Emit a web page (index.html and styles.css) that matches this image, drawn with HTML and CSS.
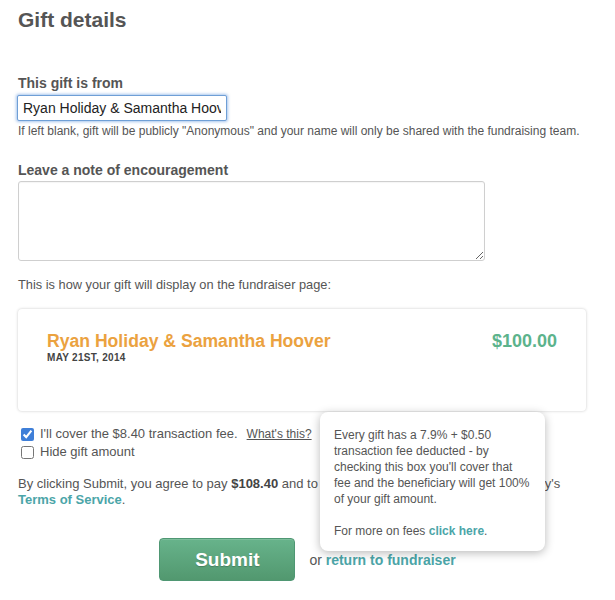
FILE: index.html
```html
<!DOCTYPE html>
<html>
<head>
<meta charset="utf-8">
<link rel="stylesheet" href="styles.css">
</head>
<body>
<main class="page">
  <h1 class="title">Gift details</h1>

  <label class="label label-from" for="from">This gift is from</label>
  <input class="text-input" id="from" type="text" value="Ryan Holiday &amp; Samantha Hoover">
  <p class="help">If left blank, gift will be publicly "Anonymous" and your name will only be shared with the fundraising team.</p>

  <label class="label label-note" for="note">Leave a note of encouragement</label>
  <textarea class="note" id="note"></textarea>

  <p class="preview-intro">This is how your gift will display on the fundraiser page:</p>

  <section class="gift-card">
    <div class="gift-info">
      <div class="gift-name">Ryan Holiday &amp; Samantha Hoover</div>
      <div class="gift-date">May 21st, 2014</div>
    </div>
    <div class="gift-amount">$100.00</div>
  </section>

  <div class="options">
    <label class="option">
      <input class="check" type="checkbox" checked>
      <span>I'll cover the $8.40 transaction fee.</span>
      <a class="whats" href="#">What's this?</a>
    </label>
    <label class="option">
      <input class="check" type="checkbox">
      <span>Hide gift amount</span>
    </label>

    <div class="tooltip">
      <p>Every gift has a 7.9% + $0.50 transaction fee deducted - by checking this box you'll cover that fee and the beneficiary will get 100% of your gift amount.</p>
      <p>For more on fees <a class="teal" href="#">click here</a>.</p>
    </div>
  </div>

  <p class="agree">By clicking Submit, you agree to pay <strong>$108.40</strong> and to accept the rules of fundraising company's <a class="teal" href="#">Terms of Service</a>.</p>

  <div class="actions">
    <button class="submit" type="button">Submit</button>
    <span class="alt">or <a class="teal" href="#">return to fundraiser</a></span>
  </div>
</main>
</body>
</html>
```

FILE: styles.css
```css
* { box-sizing: border-box; }

html, body {
  margin: 0;
  padding: 0;
  background: #fff;
}

body {
  font-family: "Liberation Sans", Arial, Helvetica, sans-serif;
  color: #555;
  font-size: 13px;
  line-height: 16px;
}

.page {
  position: relative;
  width: 615px;
  padding: 0 18px;
}

.title {
  margin: 8px 0 0;
  font-size: 21px;
  line-height: 24px;
  font-weight: bold;
  color: #555;
}

.label {
  display: block;
  font-weight: bold;
  font-size: 14px;
  line-height: 16px;
  color: #555;
}

.label-from { margin-top: 43px; }

.text-input {
  display: block;
  margin: 4px 0 0 -1px;
  width: 210px;
  height: 26px;
  padding: 0 5px;
  font-family: "Liberation Sans", Arial, sans-serif;
  font-size: 14px;
  color: #222;
  border: 1px solid #6f9fd6;
  border-radius: 2px;
  box-shadow: 0 0 3px 1px rgba(95, 150, 220, 0.55);
  outline: none;
}

.help {
  margin: 3px 0 0;
  font-size: 12px;
  line-height: 14px;
  color: #555;
  white-space: nowrap;
}

.label-note { margin-top: 24px; }

.note {
  display: block;
  margin: 3px 0 0;
  width: 467px;
  height: 80px;
  border: 1px solid #cfcfcf;
  border-radius: 3px;
  box-shadow: inset 0 1px 1px rgba(0,0,0,0.04);
  font-family: "Liberation Sans", Arial, sans-serif;
}

.preview-intro {
  margin: 16px 0 0;
  font-size: 12.8px;
  line-height: 16px;
}

.gift-card {
  margin-top: 16px;
  width: 568px;
  height: 102px;
  padding: 22px 29px 0;
  display: flex;
  justify-content: space-between;
  align-items: flex-start;
  background: #fff;
  border-radius: 4px;
  box-shadow: 0 0 3px rgba(0,0,0,0.22);
}

.gift-name {
  font-size: 17.6px;
  line-height: 20px;
  font-weight: bold;
  color: #eba23f;
}

.gift-date {
  margin-top: 1px;
  font-size: 10px;
  line-height: 11px;
  font-weight: bold;
  letter-spacing: 0.3px;
  text-transform: uppercase;
  color: #444;
}

.gift-amount {
  font-size: 18px;
  line-height: 20px;
  font-weight: bold;
  color: #5cb38c;
}

.options {
  position: relative;
  margin-top: 14px;
}

.option {
  display: flex;
  align-items: center;
  height: 18px;
  font-size: 13px;
}

.check {
  margin: 0 6px 0 3px;
  width: 13px;
  height: 13px;
  accent-color: #3f7fd8;
}

.whats {
  margin-left: 9px;
  font-size: 12px;
  color: #555;
  text-decoration: underline;
}

.tooltip {
  position: absolute;
  left: 302px;
  top: -13px;
  width: 225px;
  padding: 15px 14px 12px;
  background: #fff;
  border-radius: 8px;
  box-shadow: 0 2px 10px rgba(0,0,0,0.28);
  font-size: 12px;
  line-height: 16px;
  color: #555;
  z-index: 2;
}

.tooltip p { margin: 0; }
.tooltip p + p { margin-top: 16px; }

.teal {
  color: #4ba5a8;
  font-weight: bold;
  text-decoration: none;
}

.agree {
  margin: 15px 0 0;
  width: 568px;
  font-size: 13px;
  line-height: 16px;
}

.agree strong { color: #444; }

.actions {
  margin-top: 30px;
  display: flex;
  justify-content: center;
  align-items: center;
  gap: 14px;
  margin-left: -18px;
  margin-right: -18px;
}

.submit {
  width: 136px;
  height: 43px;
  border: 1px solid #4f9773;
  border-radius: 4px;
  background: linear-gradient(#67b38b, #52986f);
  color: #fff;
  font-family: "Liberation Sans", Arial, sans-serif;
  font-size: 19px;
  font-weight: bold;
  text-shadow: 0 1px 1px rgba(0,0,0,0.2);
  box-shadow: inset 0 1px 0 rgba(255,255,255,0.15);
}

.alt {
  font-size: 14px;
}
```
